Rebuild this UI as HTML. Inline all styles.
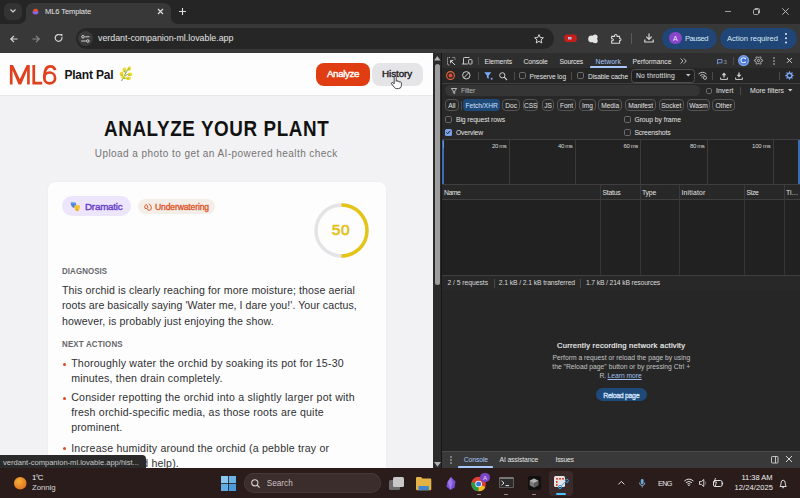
<!DOCTYPE html>
<html><head><meta charset="utf-8">
<style>
*{box-sizing:border-box;margin:0;padding:0}
html,body{width:800px;height:498px;overflow:hidden}
body{position:relative;font-family:"Liberation Sans",sans-serif;background:#202124}
.a{position:absolute}
.t{position:absolute;white-space:nowrap;line-height:1}
svg{position:absolute;overflow:visible}
#pg{position:absolute;left:0;top:0;width:433px;height:468px;overflow:hidden}
#dv{position:absolute;left:0;top:0;width:800px;height:468px;overflow:hidden}
</style></head>
<body>
<div class="a" style="left:0px;top:0px;width:800px;height:24px;background:#252525"></div>
<div class="a" style="left:0px;top:24px;width:800px;height:28.5px;background:#383838"></div>
<div class="a" style="left:0px;top:52.5px;width:800px;height:0.5px;background:#1a1a1a"></div>
<div class="a" style="left:4px;top:3px;width:18px;height:17px;background:#333333;border-radius:6px"></div>
<svg style="left:10px;top:9px" width="6" height="4" viewBox="0 0 6 4"><path d="M0.5 0.5 L3 3 L5.5 0.5" fill="none" stroke="#d0d0d0" stroke-width="1.2"/></svg>
<svg style="left:18px;top:3px" width="161" height="21" viewBox="0 0 161 21"><path d="M0 21 Q8 21 8 13 L8 8 Q8 0 16 0 L145 0 Q153 0 153 8 L153 13 Q153 21 161 21 Z" fill="#383838"/></svg>
<svg style="left:32px;top:8px" width="7" height="7" viewBox="0 0 7 7"><path d="M1 3.2 Q1 0.6 3.2 1.2 Q4 0 5.3 1.2 Q6.8 2.5 5.6 4 L1.5 4 Z" fill="#e8502e"/><path d="M0.4 3.5 L6.6 3.5 Q6.8 6.5 3.5 6.6 Q0.3 6.5 0.4 3.5Z" fill="#8a63e8"/></svg>
<div class="t" style="left:45px;top:8.32px;font-size:7.6px;color:#e6e6e6;letter-spacing:-0.13px">ML6 Template</div>
<svg style="left:157.5px;top:8.5px" width="5" height="5" viewBox="0 0 5 5"><path d="M0 0 L5 5 M5 0 L0 5" stroke="#e0e0e0" stroke-width="1.1"/></svg>
<svg style="left:178.5px;top:7.5px" width="7" height="7" viewBox="0 0 7 7"><path d="M3.5 0 V7 M0 3.5 H7" stroke="#e0e0e0" stroke-width="1.1"/></svg>
<svg style="left:725px;top:11px" width="6" height="1" viewBox="0 0 6 1"><path d="M0 0.5 H6" stroke="#bdbdbd" stroke-width="0.8"/></svg>
<svg style="left:752.5px;top:7.5px" width="7" height="7" viewBox="0 0 7 7"><rect x="0.5" y="1.5" width="5" height="5" rx="1.2" fill="none" stroke="#bdbdbd" stroke-width="0.9"/><path d="M1.8 0.5 H5.3 Q6.5 0.5 6.5 1.7 V5.2" fill="none" stroke="#bdbdbd" stroke-width="0.9"/></svg>
<svg style="left:781.5px;top:7.5px" width="7" height="7" viewBox="0 0 7 7"><path d="M0.3 0.3 L6.7 6.7 M6.7 0.3 L0.3 6.7" stroke="#c4c4c4" stroke-width="0.9"/></svg>
<svg style="left:10px;top:34.5px" width="8" height="8" viewBox="0 0 8 8"><path d="M7.5 4 H1 M4 0.8 L0.8 4 L4 7.2" fill="none" stroke="#d8d8d8" stroke-width="1.2"/></svg>
<svg style="left:32px;top:34.5px" width="8" height="8" viewBox="0 0 8 8"><path d="M0.5 4 H7 M4 0.8 L7.2 4 L4 7.2" fill="none" stroke="#8a8a8a" stroke-width="1.2"/></svg>
<svg style="left:55px;top:34.3px" width="8" height="8" viewBox="0 0 8 8"><path d="M6.9 3.2 A3.4 3.4 0 1 1 5.6 1.2" fill="none" stroke="#d8d8d8" stroke-width="1.2"/><path d="M4.6 0 L7.4 0 L7.4 2.8 Z" fill="#d8d8d8"/></svg>
<div class="a" style="left:75.5px;top:28px;width:478.5px;height:21px;background:#262626;border-radius:10.5px"></div>
<div class="a" style="left:78px;top:31px;width:15px;height:15px;background:#3a3a3a;border-radius:50%"></div>
<svg style="left:81px;top:34.5px" width="9" height="8" viewBox="0 0 9 8"><circle cx="2" cy="1.8" r="1.3" fill="none" stroke="#d0d0d0" stroke-width="1"/><path d="M4.2 1.8 H8.5 M0.2 6 H4.8" stroke="#d0d0d0" stroke-width="1"/><circle cx="6.8" cy="6" r="1.3" fill="none" stroke="#d0d0d0" stroke-width="1"/></svg>
<div class="t" style="left:98px;top:34.12px;font-size:8.84px;color:#e3e3e3;letter-spacing:-0px">verdant-companion-ml.lovable.app</div>
<svg style="left:533.5px;top:33.5px" width="10" height="10" viewBox="0 0 10 10"><path d="M5 0.6 L6.3 3.6 L9.4 3.8 L7 5.9 L7.8 9 L5 7.3 L2.2 9 L3 5.9 L0.6 3.8 L3.7 3.6 Z" fill="none" stroke="#d8d8d8" stroke-width="1" stroke-linejoin="round"/></svg>
<svg style="left:564px;top:34px" width="13" height="8.5" viewBox="0 0 13 8.5"><path d="M2.5 0.6 H10.5 Q12.8 0.6 12.8 3.2 V5.3 Q12.8 8 10.3 8 H2.7 Q0.3 8 0.3 5.3 V3.2 Q0.3 0.6 2.5 0.6Z" fill="#c41f1a"/><rect x="4.2" y="3" width="3.2" height="2.4" fill="#dfe6ff"/><rect x="5" y="3.6" width="1.6" height="1.2" fill="#6a7fd8"/></svg>
<svg style="left:588px;top:33.6px" width="10" height="9.5" viewBox="0 0 10 9.5"><circle cx="3.6" cy="4.9" r="3.4" fill="#e4e4e4"/><circle cx="7.1" cy="2.9" r="2.5" fill="#e4e4e4"/><circle cx="7.2" cy="6.7" r="2.5" fill="#e4e4e4"/></svg>
<svg style="left:610.7px;top:33.6px" width="10.5" height="9.8" viewBox="0 0 10.5 9.8"><path d="M0.6 2.4 H3.6 V1.6 Q3.6 0.5 4.8 0.5 Q6 0.5 6 1.6 V2.4 H8.6 V4.6 H9.2 Q10 4.6 10 5.6 Q10 6.6 9.2 6.6 H8.6 V9.2 H0.6 V6.8 H1.4 Q2.4 6.8 2.4 5.8 Q2.4 4.8 1.4 4.8 H0.6 Z" fill="none" stroke="#d8d8d8" stroke-width="1.05" stroke-linejoin="round"/></svg>
<div class="a" style="left:631px;top:32.5px;width:1px;height:11.5px;background:#5a5a5a"></div>
<svg style="left:644px;top:32.5px" width="10" height="10" viewBox="0 0 10 10"><path d="M5 0.5 V6 M2.3 3.6 L5 6.3 L7.7 3.6 M0.8 6.5 V9 H9.2 V6.5" fill="none" stroke="#d8d8d8" stroke-width="1.2"/></svg>
<div class="a" style="left:662px;top:27.5px;width:54.5px;height:21.5px;background:#1f4676;border-radius:11px"></div>
<div class="a" style="left:669px;top:31.9px;width:12.6px;height:12.6px;background:#8b45c8;border-radius:50%"></div>
<div class="t" style="left:672.97px;top:35.07px;font-size:7px;color:#f0e8ff">A</div>
<div class="t" style="left:685px;top:35.07px;font-size:7.6px;color:#dce6f5;letter-spacing:-0.46px">Paused</div>
<div class="a" style="left:720px;top:27.5px;width:76.5px;height:21.5px;background:#1f4676;border-radius:11px"></div>
<div class="t" style="left:727px;top:35.07px;font-size:7.6px;color:#dce6f5;letter-spacing:-0.01px">Action required</div>
<svg style="left:785px;top:33px" width="2" height="11" viewBox="0 0 2 11"><circle cx="1" cy="1" r="1" fill="#e0e8f5"/><circle cx="1" cy="5.3" r="1" fill="#e0e8f5"/><circle cx="1" cy="9.6" r="1" fill="#e0e8f5"/></svg>
<div id="pg">
<div class="a" style="left:0px;top:53px;width:433px;height:415px;background:#f2f1f3"></div>
<div class="a" style="left:0px;top:53px;width:433px;height:42px;background:#fdfdfe"></div>
<div class="a" style="left:0px;top:95px;width:433px;height:1px;background:#e9e8eb"></div>
<svg style="left:0px;top:60px" width="60" height="30" viewBox="0 60 60 30"><g fill="none" stroke="#e0401c" stroke-width="2.7"><path d="M9.9 84.4 V64.9 H13 L19.85 79.3 L26.7 64.9 H29.75 V84.4 H27.1 V70.3 L21.2 84.4 H18.5 L12.55 70.3 V84.4 Z" fill="#e0401c" stroke="none"/><path d="M33.75 65 V83.05 H42.2"/><circle cx="49.7" cy="77.9" r="5.4"/><path d="M44.3 78.2 C44.3 70 46.5 66.3 50.2 66.3 C53 66.3 54.6 68 55.2 70.2"/></g></svg>
<div class="t" style="left:64.4px;top:69.24px;font-size:12px;color:#141414;font-weight:700;letter-spacing:-0.19px">Plant Pal</div>
<svg style="left:119px;top:66px" width="14" height="16" viewBox="0 0 14 16"><path d="M2.5 15 Q5 10 10 1.5 M5.5 10.5 L10 7.5 M4 12.5 L8.5 12.5 M7 6.5 L4 4.5" stroke="#8aa05a" stroke-width="1" fill="none"/><g fill="#f2d836"><ellipse cx="5.5" cy="4" rx="2" ry="2.4" transform="rotate(-20 5.5 4)"/><ellipse cx="10.2" cy="2.6" rx="1.8" ry="2.3" transform="rotate(20 10.2 2.6)"/><ellipse cx="2.6" cy="8" rx="2" ry="2.4"/><ellipse cx="11" cy="8.4" rx="2.4" ry="1.9"/><ellipse cx="4.2" cy="11.2" rx="2" ry="1.7"/><ellipse cx="9.3" cy="12.3" rx="2.6" ry="1.9"/></g><g fill="#5cbf4a"><circle cx="5.6" cy="5" r="0.7"/><circle cx="9.8" cy="3" r="0.7"/><circle cx="3" cy="9" r="0.7"/><circle cx="10.2" cy="9" r="0.7"/><circle cx="5" cy="12" r="0.7"/><circle cx="9" cy="12.6" r="0.7"/></g></svg>
<div class="a" style="left:316.4px;top:63px;width:53.4px;height:22.6px;background:#e03d12;border-radius:8px"></div>
<div class="t" style="left:327px;top:68.9px;font-size:9.8px;color:#ffffff;letter-spacing:-0.41px;-webkit-text-stroke:0.4px #fff">Analyze</div>
<div class="a" style="left:372.4px;top:63px;width:50.3px;height:22.6px;background:#e5e5e8;border-radius:8px"></div>
<div class="t" style="left:382px;top:68.9px;font-size:9.8px;color:#1c1c1e;letter-spacing:-0.04px;-webkit-text-stroke:0.4px #1c1c1e">History</div>
<svg style="left:390.5px;top:76px" width="12" height="13" viewBox="0 0 12 13"><path d="M3.2 1.2 Q3.2 0.2 4.2 0.2 Q5.2 0.2 5.2 1.2 V5.3 Q5.4 4.6 6.2 4.7 Q7 4.8 7 5.6 Q7.3 5 8 5.2 Q8.7 5.4 8.7 6.2 Q9.1 5.8 9.7 6 Q10.4 6.3 10.4 7.2 V9.5 Q10.4 12.4 7.6 12.6 H5.6 Q4.2 12.6 3.3 11.4 L0.6 7.8 Q0.1 7 0.8 6.6 Q1.5 6.2 2.2 6.9 L3.2 7.9 Z" fill="#fff" stroke="#1a1a1a" stroke-width="0.8"/></svg>
<div class="t" style="left:103.5px;top:118.88px;font-size:21.4px;color:#111111;font-weight:700;letter-spacing:0.69px;transform:scaleX(0.88);transform-origin:0 0">ANALYZE YOUR PLANT</div>
<div class="t" style="left:94.75px;top:148.93px;font-size:10px;color:#757575;letter-spacing:0.44px">Upload a photo to get an AI-powered health check</div>
<div class="a" style="left:48.2px;top:181.5px;width:337.8px;height:298.5px;background:#fdfdfe;border-radius:7px;box-shadow:0 0 0 0.5px #ececee"></div>
<div class="a" style="left:62.2px;top:196.2px;width:68.5px;height:20px;background:#ece5fb;border-radius:10px"></div>
<svg style="left:70px;top:201.5px" width="11" height="10" viewBox="0 0 11 10"><path d="M0.6 0.6 Q3.5 0 6.2 0.9 Q6.4 4.8 3.6 6 Q0.8 4.8 0.6 0.6Z" fill="#4f86dc"/><path d="M1.4 1.2 Q3.5 0.8 5.4 1.4" stroke="#8cc0f0" stroke-width="0.6" fill="none"/><path d="M4.4 3.4 Q7.3 2.6 10 3.5 Q10 8.2 7.2 9.6 Q4.5 8.2 4.4 3.4Z" fill="#f4c430"/><path d="M5.6 7 Q6.4 8.6 8 8.2" stroke="#f08040" stroke-width="0.9" fill="none"/></svg>
<div class="t" style="left:85px;top:201.9px;font-size:9.8px;color:#6a3ec9;letter-spacing:-0.21px;-webkit-text-stroke:0.4px #6a3ec9">Dramatic</div>
<div class="a" style="left:138px;top:199px;width:77px;height:14.8px;background:#f4eee9;border-radius:7.5px"></div>
<svg style="left:144.3px;top:202.8px" width="8" height="8" viewBox="0 0 8 8"><path d="M2.2 1.3 Q3.8 3 3.8 4.2 Q3.8 5.6 2.2 5.6 Q0.6 5.6 0.6 4.2 Q0.6 3 2.2 1.3Z" fill="none" stroke="#e0501e" stroke-width="0.95"/><path d="M5 0.6 Q7.4 3.4 7.4 5 Q7.4 7.3 5.2 7.3 Q3.6 7.3 3.3 6" fill="none" stroke="#e0501e" stroke-width="0.95"/></svg>
<div class="t" style="left:155px;top:202.62px;font-size:8.6px;color:#e0501e;letter-spacing:-0.15px;-webkit-text-stroke:0.3px #e0501e">Underwatering</div>
<svg style="left:313.5px;top:202.5px" width="55" height="55" viewBox="0 0 55 55"><circle cx="27.5" cy="27.5" r="25.5" fill="none" stroke="#e4e4e7" stroke-width="3.4"/><path d="M27.5 2 A25.5 25.5 0 0 1 27.5 53" fill="none" stroke="#e6c414" stroke-width="3.4"/></svg>
<div class="t" style="left:331.75px;top:222.18px;font-size:15.5px;color:#e3c012;letter-spacing:0.63px;-webkit-text-stroke:0.6px #e3c012">50</div>
<div class="t" style="left:62px;top:267.32px;font-size:8.6px;color:#66666a;font-weight:700;letter-spacing:0.1px;transform:scaleX(0.92);transform-origin:0 0">DIAGNOSIS</div>
<div class="t" style="left:62px;top:284.72px;font-size:10.6px;color:#303032;letter-spacing:0.11px">This orchid is clearly reaching for more moisture; those aerial</div>
<div class="t" style="left:62px;top:300.22px;font-size:10.6px;color:#303032;letter-spacing:0.06px">roots are basically saying 'Water me, I dare you!'. Your cactus,</div>
<div class="t" style="left:62px;top:315.82px;font-size:10.6px;color:#303032;letter-spacing:0.13px">however, is probably just enjoying the show.</div>
<div class="t" style="left:62px;top:340.22px;font-size:8.6px;color:#66666a;font-weight:700;letter-spacing:0.2px;transform:scaleX(0.92);transform-origin:0 0">NEXT ACTIONS</div>
<div class="a" style="left:62.6px;top:362.6px;width:3px;height:3px;background:#e0481e;border-radius:50%"></div>
<div class="t" style="left:71.2px;top:357.92px;font-size:10.6px;color:#303032;letter-spacing:0.2px">Thoroughly water the orchid by soaking its pot for 15-30</div>
<div class="t" style="left:71.2px;top:373.02px;font-size:10.6px;color:#303032;letter-spacing:0.18px">minutes, then drain completely.</div>
<div class="a" style="left:62.6px;top:396.9px;width:3px;height:3px;background:#e0481e;border-radius:50%"></div>
<div class="t" style="left:71.2px;top:392.22px;font-size:10.6px;color:#303032;letter-spacing:0.23px">Consider repotting the orchid into a slightly larger pot with</div>
<div class="t" style="left:71.2px;top:407.32px;font-size:10.6px;color:#303032;letter-spacing:0.19px">fresh orchid-specific media, as those roots are quite</div>
<div class="t" style="left:71.2px;top:422.42px;font-size:10.6px;color:#303032;letter-spacing:0.11px">prominent.</div>
<div class="a" style="left:62.6px;top:447.4px;width:3px;height:3px;background:#e0481e;border-radius:50%"></div>
<div class="t" style="left:71.2px;top:442.72px;font-size:10.6px;color:#303032;letter-spacing:0.18px">Increase humidity around the orchid (a pebble tray or</div>
<div class="t" style="left:71.2px;top:457.82px;font-size:10.6px;color:#303032;letter-spacing:0.18px">humidifier could help).</div>
</div>
<div class="a" style="left:433px;top:53px;width:8.3px;height:415px;background:#2b2b2b"></div>
<svg style="left:434px;top:55.5px" width="6.6" height="4.5" viewBox="0 0 6.6 4.5"><path d="M0 4.5 L3.3 0 L6.6 4.5Z" fill="#b0b0b0"/></svg>
<div class="a" style="left:434.7px;top:64px;width:5.2px;height:221px;background:#9e9e9e;border-radius:2.6px"></div>
<svg style="left:433.8px;top:461.8px" width="7" height="4.8" viewBox="0 0 7 4.8"><path d="M0 0 L3.5 4.8 L7 0Z" fill="#b0b0b0"/></svg>
<div id="dv">
<div class="a" style="left:441px;top:53px;width:359px;height:415px;background:#262626"></div>
<div class="a" style="left:441px;top:53px;width:359px;height:14.5px;background:#2e2e2e"></div>
<div class="a" style="left:441px;top:67.5px;width:359px;height:0.8px;background:#3f3f3f"></div>
<svg style="left:447px;top:56.5px" width="8.5" height="8.5" viewBox="0 0 8.5 8.5"><path d="M3 0.5 H1 Q0.5 0.5 0.5 1 V7.5 Q0.5 8 1 8 H3 M5.5 0.5 H7.5 Q8 0.5 8 1 V3" fill="none" stroke="#c8c8c8" stroke-width="0.9" stroke-dasharray="1.2 0.8"/><path d="M3.6 3.6 L8 8 M3.6 3.6 H6.2 M3.6 3.6 V6.2" fill="none" stroke="#d8d8d8" stroke-width="1"/></svg>
<svg style="left:462px;top:57px" width="10.5" height="7.5" viewBox="0 0 10.5 7.5"><path d="M1.5 7 V1.3 Q1.5 0.5 2.3 0.5 H7.5 M0 7 H5.8" fill="none" stroke="#c8c8c8" stroke-width="1"/><rect x="6.6" y="2.6" width="3.4" height="4.4" rx="0.6" fill="none" stroke="#c8c8c8" stroke-width="1"/></svg>
<div class="a" style="left:477.5px;top:56.5px;width:0.8px;height:8px;background:#4a4a4a"></div>
<div class="t" style="left:484.5px;top:58.94px;font-size:6.8px;color:#e3e3e3;letter-spacing:-0.11px">Elements</div>
<div class="t" style="left:523.6px;top:58.94px;font-size:6.8px;color:#e3e3e3;letter-spacing:-0.14px">Console</div>
<div class="t" style="left:559.5px;top:58.94px;font-size:6.8px;color:#e3e3e3;letter-spacing:-0.21px">Sources</div>
<div class="t" style="left:595.4px;top:58.94px;font-size:6.8px;color:#a8c7fa;letter-spacing:0.09px">Network</div>
<div class="a" style="left:590px;top:66.2px;width:37px;height:2px;background:#a8c7fa;border-radius:1px 1px 0 0"></div>
<div class="t" style="left:632.5px;top:58.94px;font-size:6.8px;color:#e3e3e3;letter-spacing:0.01px">Performance</div>
<svg style="left:679.5px;top:57.5px" width="7" height="6" viewBox="0 0 7 6"><path d="M0.5 0.5 L3 3 L0.5 5.5 M3.8 0.5 L6.3 3 L3.8 5.5" fill="none" stroke="#c8c8c8" stroke-width="0.9"/></svg>
<svg style="left:717px;top:58.5px" width="5.5" height="5.5" viewBox="0 0 5.5 5.5"><path d="M0.5 0.5 H5 V3.8 H1.8 L0.5 5 Z" fill="none" stroke="#7a9ae0" stroke-width="0.9"/></svg>
<div class="t" style="left:723.5px;top:59.45px;font-size:6.2px;color:#9a9a9a">3</div>
<div class="a" style="left:733px;top:56.5px;width:0.8px;height:8px;background:#4a4a4a"></div>
<svg style="left:738.1px;top:54.8px" width="11.2" height="11.2" viewBox="0 0 11.2 11.2"><defs><radialGradient id="aig" cx="0.5" cy="0.5" r="0.5"><stop offset="0.55" stop-color="#3d6fd6"/><stop offset="1" stop-color="#8db2f2"/></radialGradient></defs><circle cx="5.6" cy="5.6" r="5.6" fill="url(#aig)"/></svg>
<svg style="left:740.3px;top:57.3px" width="6.5" height="6.5" viewBox="0 0 6.5 6.5"><path d="M5 1.3 A2.5 2.5 0 1 0 5.6 4.6" fill="none" stroke="#f0f4ff" stroke-width="1.1"/><circle cx="5.3" cy="1.6" r="0.8" fill="#f0f4ff"/></svg>
<svg style="left:754px;top:56px" width="9" height="9" viewBox="0 0 9 9"><path d="M8.55 4.50 L8.53 4.85 L8.34 5.18 L7.69 5.35 L7.18 5.47 L7.08 5.70 L6.97 5.92 L6.83 6.13 L6.68 6.33 L6.83 6.83 L7.01 7.49 L6.82 7.82 L6.53 8.01 L6.21 8.17 L5.83 8.16 L5.35 7.69 L4.99 7.31 L4.75 7.34 L4.50 7.35 L4.25 7.34 L4.01 7.31 L3.65 7.69 L3.17 8.16 L2.79 8.17 L2.48 8.01 L2.18 7.82 L1.99 7.49 L2.17 6.83 L2.32 6.33 L2.17 6.13 L2.03 5.93 L1.92 5.70 L1.82 5.47 L1.31 5.35 L0.66 5.18 L0.47 4.85 L0.45 4.50 L0.47 4.15 L0.66 3.82 L1.31 3.65 L1.82 3.53 L1.92 3.30 L2.03 3.08 L2.17 2.87 L2.32 2.67 L2.17 2.17 L1.99 1.51 L2.18 1.18 L2.47 0.99 L2.79 0.83 L3.17 0.84 L3.65 1.31 L4.01 1.69 L4.25 1.66 L4.50 1.65 L4.75 1.66 L4.99 1.69 L5.35 1.31 L5.83 0.84 L6.21 0.83 L6.52 0.99 L6.82 1.18 L7.01 1.51 L6.83 2.17 L6.68 2.67 L6.83 2.87 L6.97 3.08 L7.08 3.30 L7.18 3.53 L7.69 3.65 L8.34 3.82 L8.53 4.15Z" fill="none" stroke="#cfcfcf" stroke-width="0.9" stroke-linejoin="round"/><circle cx="4.5" cy="4.5" r="1.1" fill="none" stroke="#cfcfcf" stroke-width="0.9"/></svg>
<svg style="left:773px;top:56.5px" width="2" height="8" viewBox="0 0 2 8"><circle cx="1" cy="1" r="0.8" fill="#cfcfcf"/><circle cx="1" cy="4" r="0.8" fill="#cfcfcf"/><circle cx="1" cy="7" r="0.8" fill="#cfcfcf"/></svg>
<svg style="left:786.9px;top:58px" width="4.8" height="4.8" viewBox="0 0 4.8 4.8"><path d="M0 0 L4.8 4.8 M4.8 0 L0 4.8" stroke="#d8d8d8" stroke-width="0.95"/></svg>
<div class="a" style="left:441px;top:68.3px;width:359px;height:14.7px;background:#262626"></div>
<div class="a" style="left:441px;top:83px;width:359px;height:0.8px;background:#3f3f3f"></div>
<svg style="left:446px;top:71px" width="9" height="9" viewBox="0 0 9 9"><circle cx="4.5" cy="4.5" r="3.9" fill="none" stroke="#e9683f" stroke-width="1.1"/><circle cx="4.5" cy="4.5" r="2" fill="#e5483a"/></svg>
<svg style="left:462.2px;top:71.2px" width="8.6" height="8.6" viewBox="0 0 8.6 8.6"><circle cx="4.3" cy="4.3" r="3.7" fill="none" stroke="#cfcfcf" stroke-width="1"/><path d="M1.7 6.9 L6.9 1.7" stroke="#cfcfcf" stroke-width="1"/></svg>
<div class="a" style="left:477.5px;top:71.5px;width:0.8px;height:8px;background:#4a4a4a"></div>
<svg style="left:484px;top:72px" width="9" height="8" viewBox="0 0 9 8"><path d="M0.3 0.3 H7.3 L4.7 3.6 V6.8 L2.9 5.8 V3.6 Z" fill="#7cacf8"/><circle cx="7.6" cy="6.8" r="1" fill="#7cacf8"/></svg>
<svg style="left:499px;top:71.5px" width="8.5" height="8.5" viewBox="0 0 8.5 8.5"><circle cx="3.3" cy="3.3" r="2.6" fill="none" stroke="#d0d0d0" stroke-width="1"/><path d="M5.2 5.2 L8 8" stroke="#d0d0d0" stroke-width="1.1"/></svg>
<div class="a" style="left:513.8px;top:71.5px;width:0.8px;height:8px;background:#4a4a4a"></div>
<div class="a" style="left:519.3px;top:72.3px;width:6.5px;height:6.5px;background:transparent;border:1px solid #6a6a6a;border-radius:1.8px"></div>
<div class="t" style="left:529.6px;top:73.76px;font-size:6.6px;color:#e3e3e3;letter-spacing:-0.05px">Preserve log</div>
<div class="a" style="left:571.3px;top:71.5px;width:0.8px;height:8px;background:#4a4a4a"></div>
<div class="a" style="left:577.3px;top:72.3px;width:6.5px;height:6.5px;background:transparent;border:1px solid #6a6a6a;border-radius:1.8px"></div>
<div class="t" style="left:588px;top:73.76px;font-size:6.6px;color:#e3e3e3;letter-spacing:-0.11px">Disable cache</div>
<div class="a" style="left:631.4px;top:68.5px;width:63.2px;height:14.3px;background:#202020;border:0.8px solid #505050;border-radius:3.5px"></div>
<div class="t" style="left:636px;top:73.39px;font-size:6.8px;color:#e3e3e3;letter-spacing:0.18px">No throttling</div>
<svg style="left:686.2px;top:74.3px" width="4.5" height="2.6" viewBox="0 0 4.5 2.6"><path d="M0 0 H4.5 L2.25 2.6Z" fill="#c8c8c8"/></svg>
<svg style="left:697.8px;top:71px" width="9.5" height="8.5" viewBox="0 0 9.5 8.5"><path d="M0.5 3 Q4.5 -0.5 8.5 3 M2 4.6 Q4.5 2.3 7 4.6 M3.4 6.2 Q4.5 5.2 5.6 6.2" fill="none" stroke="#d0d0d0" stroke-width="0.9"/><circle cx="7" cy="6.8" r="1.6" fill="#282828" stroke="#d0d0d0" stroke-width="0.8"/></svg>
<div class="a" style="left:712px;top:71.5px;width:0.8px;height:8px;background:#4a4a4a"></div>
<svg style="left:719.5px;top:71.5px" width="8" height="8" viewBox="0 0 8 8"><path d="M4 5.6 V2.5" stroke="#d0d0d0" stroke-width="1.3"/><path d="M1.6 3.2 L4 0.4 L6.4 3.2Z" fill="#d0d0d0"/><path d="M0.6 5.5 V7.4 H7.4 V5.5" fill="none" stroke="#d0d0d0" stroke-width="1"/></svg>
<svg style="left:735.3px;top:71.5px" width="8" height="8" viewBox="0 0 8 8"><path d="M4 0.4 V3.4" stroke="#d0d0d0" stroke-width="1.3"/><path d="M1.6 2.8 L4 5.6 L6.4 2.8Z" fill="#d0d0d0"/><path d="M0.6 5.5 V7.4 H7.4 V5.5" fill="none" stroke="#d0d0d0" stroke-width="1"/></svg>
<div class="a" style="left:779px;top:71.5px;width:0.8px;height:8px;background:#4a4a4a"></div>
<svg style="left:785.2px;top:71.1px" width="9" height="9" viewBox="0 0 9 9"><path d="M8.80 4.50 L8.78 4.87 L8.17 5.15 L7.42 5.28 L7.34 5.53 L7.24 5.78 L7.12 6.01 L7.55 6.64 L7.79 7.26 L7.54 7.54 L7.26 7.79 L6.64 7.55 L6.01 7.12 L5.78 7.24 L5.53 7.34 L5.28 7.42 L5.15 8.17 L4.87 8.78 L4.50 8.80 L4.13 8.78 L3.85 8.17 L3.72 7.42 L3.47 7.34 L3.22 7.24 L2.99 7.12 L2.36 7.55 L1.74 7.79 L1.46 7.54 L1.21 7.26 L1.45 6.64 L1.88 6.01 L1.76 5.78 L1.66 5.53 L1.58 5.28 L0.83 5.15 L0.22 4.87 L0.20 4.50 L0.22 4.13 L0.83 3.85 L1.58 3.72 L1.66 3.47 L1.76 3.22 L1.88 2.99 L1.45 2.36 L1.21 1.74 L1.46 1.46 L1.74 1.21 L2.36 1.45 L2.99 1.88 L3.22 1.76 L3.47 1.66 L3.72 1.58 L3.85 0.83 L4.13 0.22 L4.50 0.20 L4.87 0.22 L5.15 0.83 L5.28 1.58 L5.53 1.66 L5.78 1.76 L6.01 1.88 L6.64 1.45 L7.26 1.21 L7.54 1.46 L7.79 1.74 L7.55 2.36 L7.12 2.99 L7.24 3.22 L7.34 3.47 L7.42 3.72 L8.17 3.85 L8.78 4.13Z" fill="#7aa2ee"/><circle cx="4.5" cy="4.5" r="1.6" fill="#262626"/></svg>
<div class="a" style="left:441px;top:83.8px;width:359px;height:13.7px;background:#282828"></div>
<div class="a" style="left:445px;top:84.7px;width:255px;height:11.5px;background:#353535;border-radius:5.75px"></div>
<svg style="left:450.5px;top:87.8px" width="6" height="6" viewBox="0 0 6 6"><path d="M0.3 0.5 H5.7 L3.7 3 V5.6 L2.3 4.8 V3 Z" fill="none" stroke="#c8c8c8" stroke-width="0.9"/></svg>
<div class="t" style="left:461px;top:88.04px;font-size:6.8px;color:#b8b8b8;letter-spacing:-0.19px">Filter</div>
<div class="a" style="left:705.8px;top:87.5px;width:6.5px;height:6.5px;background:transparent;border:1px solid #6a6a6a;border-radius:1.8px"></div>
<div class="t" style="left:716px;top:88.04px;font-size:6.8px;color:#e3e3e3;letter-spacing:0.08px">Invert</div>
<div class="a" style="left:739.8px;top:86.5px;width:0.8px;height:8px;background:#4a4a4a"></div>
<div class="t" style="left:750px;top:88.04px;font-size:6.8px;color:#e3e3e3;letter-spacing:0.03px">More filters</div>
<svg style="left:788px;top:89.3px" width="4.5" height="2.6" viewBox="0 0 4.5 2.6"><path d="M0 0 H4.5 L2.25 2.6Z" fill="#d0d0d0"/></svg>
<div class="a" style="left:441px;top:97.5px;width:359px;height:15px;background:#282828"></div>
<div class="a" style="left:445px;top:99.4px;width:13.6px;height:11.4px;background:transparent;border:0.8px solid #555555;border-radius:4px"></div>
<div class="t" style="left:448.13px;top:102.81px;font-size:6.6px;color:#e3e3e3">All</div>
<div class="a" style="left:463.4px;top:99.4px;width:36.6px;height:11.4px;background:#1e4a7a;border-radius:4px"></div>
<div class="t" style="left:465.56px;top:102.81px;font-size:6.6px;color:#d3e3fd">Fetch/XHR</div>
<div class="a" style="left:502.4px;top:99.4px;width:17.6px;height:11.4px;background:transparent;border:0.8px solid #555555;border-radius:4px"></div>
<div class="t" style="left:505.33px;top:102.81px;font-size:6.6px;color:#e3e3e3">Doc</div>
<div class="a" style="left:523px;top:99.4px;width:15.4px;height:11.4px;background:transparent;border:0.8px solid #555555;border-radius:4px"></div>
<div class="t" style="left:523.91px;top:102.81px;font-size:6.6px;color:#e3e3e3">CSS</div>
<div class="a" style="left:542px;top:99.4px;width:12px;height:11.4px;background:transparent;border:0.8px solid #555555;border-radius:4px"></div>
<div class="t" style="left:544.15px;top:102.81px;font-size:6.6px;color:#e3e3e3">JS</div>
<div class="a" style="left:557px;top:99.4px;width:19px;height:11.4px;background:transparent;border:0.8px solid #555555;border-radius:4px"></div>
<div class="t" style="left:559.9px;top:102.81px;font-size:6.6px;color:#e3e3e3">Font</div>
<div class="a" style="left:579px;top:99.4px;width:17px;height:11.4px;background:transparent;border:0.8px solid #555555;border-radius:4px"></div>
<div class="t" style="left:582px;top:102.81px;font-size:6.6px;color:#e3e3e3">Img</div>
<div class="a" style="left:598px;top:99.4px;width:24.4px;height:11.4px;background:transparent;border:0.8px solid #555555;border-radius:4px"></div>
<div class="t" style="left:601.21px;top:102.81px;font-size:6.6px;color:#e3e3e3">Media</div>
<div class="a" style="left:625.4px;top:99.4px;width:30.6px;height:11.4px;background:transparent;border:0.8px solid #555555;border-radius:4px"></div>
<div class="t" style="left:628.23px;top:102.81px;font-size:6.6px;color:#e3e3e3">Manifest</div>
<div class="a" style="left:658.6px;top:99.4px;width:25.4px;height:11.4px;background:transparent;border:0.8px solid #555555;border-radius:4px"></div>
<div class="t" style="left:661.21px;top:102.81px;font-size:6.6px;color:#e3e3e3">Socket</div>
<div class="a" style="left:687px;top:99.4px;width:23px;height:11.4px;background:transparent;border:0.8px solid #555555;border-radius:4px"></div>
<div class="t" style="left:689.27px;top:102.81px;font-size:6.6px;color:#e3e3e3">Wasm</div>
<div class="a" style="left:712.4px;top:99.4px;width:22.6px;height:11.4px;background:transparent;border:0.8px solid #555555;border-radius:4px"></div>
<div class="t" style="left:715.45px;top:102.81px;font-size:6.6px;color:#e3e3e3">Other</div>
<div class="a" style="left:460.6px;top:100.5px;width:0.8px;height:9px;background:#4a4a4a"></div>
<div class="a" style="left:441px;top:112.5px;width:359px;height:0.8px;background:#3f3f3f"></div>
<div class="a" style="left:441px;top:113.3px;width:359px;height:25.7px;background:#282828"></div>
<div class="a" style="left:445px;top:116px;width:6.5px;height:6.5px;background:transparent;border:1px solid #6a6a6a;border-radius:1.8px"></div>
<div class="t" style="left:456px;top:117.14px;font-size:6.8px;color:#e3e3e3;letter-spacing:-0.1px">Big request rows</div>
<div class="a" style="left:445px;top:129px;width:6.5px;height:6.5px;background:#7aa2e8;border-radius:1.5px"></div><svg style="left:445px;top:129px" width="6.5" height="6.5" viewBox="0 0 6.5 6.5"><path d="M1.3 3.3 L2.7 4.7 L5.3 1.8" fill="none" stroke="#1f1f1f" stroke-width="1"/></svg>
<div class="t" style="left:456px;top:130.34px;font-size:6.8px;color:#e3e3e3;letter-spacing:-0.17px">Overview</div>
<div class="a" style="left:624.4px;top:116px;width:6.5px;height:6.5px;background:transparent;border:1px solid #6a6a6a;border-radius:1.8px"></div>
<div class="t" style="left:634.4px;top:117.14px;font-size:6.8px;color:#e3e3e3;letter-spacing:-0.05px">Group by frame</div>
<div class="a" style="left:624.4px;top:129px;width:6.5px;height:6.5px;background:transparent;border:1px solid #6a6a6a;border-radius:1.8px"></div>
<div class="t" style="left:634.4px;top:130.34px;font-size:6.8px;color:#e3e3e3;letter-spacing:-0.16px">Screenshots</div>
<div class="a" style="left:441px;top:139px;width:359px;height:0.8px;background:#3f3f3f"></div>
<div class="a" style="left:441px;top:139.8px;width:359px;height:44.2px;background:#222222"></div>
<div class="a" style="left:508.5px;top:139.8px;width:0.8px;height:44.2px;background:#3a3a3a"></div>
<div class="t" style="left:492.1px;top:142.92px;font-size:6px;color:#d8d8d8;letter-spacing:-0.39px">20 ms</div>
<div class="a" style="left:574.5px;top:139.8px;width:0.8px;height:44.2px;background:#3a3a3a"></div>
<div class="t" style="left:558.1px;top:142.92px;font-size:6px;color:#d8d8d8;letter-spacing:-0.39px">40 ms</div>
<div class="a" style="left:640px;top:139.8px;width:0.8px;height:44.2px;background:#3a3a3a"></div>
<div class="t" style="left:623.6px;top:142.92px;font-size:6px;color:#d8d8d8;letter-spacing:-0.39px">60 ms</div>
<div class="a" style="left:706.5px;top:139.8px;width:0.8px;height:44.2px;background:#3a3a3a"></div>
<div class="t" style="left:690.1px;top:142.92px;font-size:6px;color:#d8d8d8;letter-spacing:-0.39px">80 ms</div>
<div class="a" style="left:772.5px;top:139.8px;width:0.8px;height:44.2px;background:#3a3a3a"></div>
<div class="t" style="left:752px;top:142.92px;font-size:6px;color:#d8d8d8;letter-spacing:-0.2px">100 ms</div>
<div class="a" style="left:442.3px;top:140px;width:2px;height:44px;background:#3d6cb4"></div>
<div class="a" style="left:442.6px;top:141px;width:1.4px;height:7px;background:#6a8fc8"></div>
<div class="a" style="left:797.5px;top:140px;width:2px;height:44px;background:#3d6cb4"></div>
<div class="a" style="left:441px;top:184px;width:359px;height:1px;background:#3f3f3f"></div>
<div class="a" style="left:441px;top:185px;width:359px;height:14.2px;background:#282828"></div>
<div class="a" style="left:441px;top:199.2px;width:359px;height:0.8px;background:#3f3f3f"></div>
<div class="a" style="left:600px;top:185px;width:0.8px;height:90px;background:#3a3a3a"></div>
<div class="a" style="left:639.5px;top:185px;width:0.8px;height:90px;background:#3a3a3a"></div>
<div class="a" style="left:678.8px;top:185px;width:0.8px;height:90px;background:#3a3a3a"></div>
<div class="a" style="left:744.3px;top:185px;width:0.8px;height:90px;background:#3a3a3a"></div>
<div class="a" style="left:783.8px;top:185px;width:0.8px;height:90px;background:#3a3a3a"></div>
<div class="t" style="left:444px;top:190.24px;font-size:6.8px;color:#e3e3e3;letter-spacing:-0.41px">Name</div>
<div class="t" style="left:602.5px;top:190.24px;font-size:6.8px;color:#e3e3e3;letter-spacing:-0.21px">Status</div>
<div class="t" style="left:642px;top:190.24px;font-size:6.8px;color:#e3e3e3;letter-spacing:-0.19px">Type</div>
<div class="t" style="left:681.5px;top:190.24px;font-size:6.8px;color:#e3e3e3;letter-spacing:0.19px">Initiator</div>
<div class="t" style="left:746.5px;top:190.24px;font-size:6.8px;color:#e3e3e3;letter-spacing:-0.31px">Size</div>
<div class="t" style="left:786px;top:190.24px;font-size:6.8px;color:#e3e3e3">Ti…</div>
<div class="a" style="left:441px;top:200px;width:359px;height:75px;background:#212121"></div>
<div class="a" style="left:600px;top:200px;width:0.8px;height:75px;background:#353535"></div>
<div class="a" style="left:639.5px;top:200px;width:0.8px;height:75px;background:#353535"></div>
<div class="a" style="left:678.8px;top:200px;width:0.8px;height:75px;background:#353535"></div>
<div class="a" style="left:744.3px;top:200px;width:0.8px;height:75px;background:#353535"></div>
<div class="a" style="left:783.8px;top:200px;width:0.8px;height:75px;background:#353535"></div>
<div class="a" style="left:441px;top:275px;width:359px;height:0.8px;background:#3f3f3f"></div>
<div class="a" style="left:441px;top:275.8px;width:359px;height:14.2px;background:#282828"></div>
<div class="t" style="left:447.5px;top:280.04px;font-size:6.8px;color:#d8d8d8;letter-spacing:-0.05px">2 / 5 requests</div>
<div class="a" style="left:493.5px;top:279.3px;width:0.8px;height:8.7px;background:#4a4a4a"></div>
<div class="t" style="left:498.75px;top:280.04px;font-size:6.8px;color:#d8d8d8;letter-spacing:-0.1px">2.1 kB / 2.1 kB transferred</div>
<div class="a" style="left:580.3px;top:279.3px;width:0.8px;height:8.7px;background:#4a4a4a"></div>
<div class="t" style="left:586px;top:280.04px;font-size:6.8px;color:#d8d8d8;letter-spacing:-0.15px">1.7 kB / 214 kB resources</div>
<div class="t" style="left:557px;top:342.07px;font-size:7.6px;color:#ececec;letter-spacing:0.27px;-webkit-text-stroke:0.2px #ececec">Currently recording network activity</div>
<div class="t" style="left:552.5px;top:355.28px;font-size:6.75px;color:#c4c4c4;letter-spacing:-0px">Perform a request or reload the page by using</div>
<div class="t" style="left:552.25px;top:364.28px;font-size:6.75px;color:#c4c4c4;letter-spacing:0.01px">the "Reload page" button or by pressing Ctrl +</div>
<div class="t" style="left:599.5px;top:373.28px;font-size:6.75px;color:#c4c4c4">R.</div>
<div class="t" style="left:607.5px;top:373.28px;font-size:6.75px;color:#9fbff0;letter-spacing:-0.03px;text-decoration:underline">Learn more</div>
<div class="a" style="left:595.75px;top:388.25px;width:51px;height:13px;background:#1e4a7a;border-radius:7px"></div>
<div class="t" style="left:603.25px;top:392.37px;font-size:7px;color:#d3e3fd;letter-spacing:-0.34px;-webkit-text-stroke:0.3px #d3e3fd">Reload page</div>
<div class="a" style="left:441px;top:451px;width:359px;height:17px;background:#393939"></div>
<div class="a" style="left:441px;top:450.5px;width:359px;height:0.7px;background:#4a4a4a"></div>
<svg style="left:450px;top:455.5px" width="2" height="8" viewBox="0 0 2 8"><circle cx="1" cy="1" r="0.8" fill="#cfcfcf"/><circle cx="1" cy="4" r="0.8" fill="#cfcfcf"/><circle cx="1" cy="7" r="0.8" fill="#cfcfcf"/></svg>
<div class="t" style="left:463.75px;top:457.24px;font-size:6.8px;color:#a8c7fa;letter-spacing:-0.1px">Console</div>
<div class="a" style="left:458px;top:465.8px;width:35px;height:2px;background:#a8c7fa;border-radius:1px 1px 0 0"></div>
<div class="t" style="left:499.5px;top:457.24px;font-size:6.8px;color:#e3e3e3;letter-spacing:-0.13px">AI assistance</div>
<div class="t" style="left:555.5px;top:457.24px;font-size:6.8px;color:#e3e3e3;letter-spacing:-0.23px">Issues</div>
<svg style="left:770.5px;top:455.5px" width="7.5" height="7.5" viewBox="0 0 7.5 7.5"><rect x="0.5" y="0.5" width="6.5" height="6.5" rx="0.7" fill="none" stroke="#d0d0d0" stroke-width="0.9"/><path d="M4.5 0.5 V7" stroke="#d0d0d0" stroke-width="0.9"/></svg>
<svg style="left:786px;top:456px" width="6" height="6" viewBox="0 0 6 6"><path d="M0 0 L6 6 M6 0 L0 6" stroke="#d8d8d8" stroke-width="1"/></svg>
<div class="a" style="left:441px;top:53px;width:1px;height:415px;background:#161616"></div>
</div>
<div class="a" style="left:0px;top:455px;width:145.6px;height:13.4px;background:#2a2a2b;border-radius:0 4px 0 0"></div>
<div class="t" style="left:3px;top:458.61px;font-size:7.55px;color:#c8c8c8;letter-spacing:0px">verdant-companion-ml.lovable.app/hist...</div>
<div class="a" style="left:0px;top:468.4px;width:800px;height:29.6px;background:#2a1c1b"></div>
<svg style="left:13.5px;top:476.5px" width="12.5" height="12.5" viewBox="0 0 12.5 12.5"><defs><radialGradient id="wg" cx="0.4" cy="0.35" r="0.7"><stop offset="0" stop-color="#f6b03a"/><stop offset="1" stop-color="#e0701e"/></radialGradient></defs><circle cx="6.25" cy="6.25" r="6.25" fill="url(#wg)"/></svg>
<div class="t" style="left:32px;top:474.2px;font-size:7.8px;color:#f0f0f0;letter-spacing:-0.86px">1°C</div>
<div class="t" style="left:32px;top:483.8px;font-size:7.8px;color:#d8d8d8;letter-spacing:-0.06px">Zonnig</div>
<svg style="left:220.7px;top:476.1px" width="15" height="15" viewBox="0 0 15 15"><rect x="0" y="0" width="7.1" height="7.1" fill="#8cc8ee"/><rect x="7.9" y="0" width="7.1" height="7.1" fill="#6ab4e8"/><rect x="0" y="7.9" width="7.1" height="7.1" fill="#62ace4"/><rect x="7.9" y="7.9" width="7.1" height="7.1" fill="#4a9ade"/></svg>
<div class="a" style="left:244.3px;top:473.1px;width:137px;height:20.2px;background:#3a2d2c;border-radius:10px;box-shadow:inset 0 0 0 0.7px #4a3c3a"></div>
<svg style="left:251px;top:479.2px" width="9" height="9" viewBox="0 0 9 9"><circle cx="3.8" cy="3.8" r="3.1" fill="none" stroke="#d8d0d0" stroke-width="1.1"/><path d="M6 6 L8.6 8.6" stroke="#d8d0d0" stroke-width="1.2"/></svg>
<div class="t" style="left:266.8px;top:479.96px;font-size:8.2px;color:#cdc3c2;letter-spacing:0px">Search</div>
<div class="a" style="left:388.75px;top:480px;width:11.25px;height:10px;background:#6a6a6a;border-radius:1.5px"></div>
<div class="a" style="left:392.5px;top:476.5px;width:11.25px;height:10px;background:#c8c8c8;border-radius:1.5px"></div>
<svg style="left:416px;top:477px" width="15.3" height="13.3" viewBox="0 0 15.3 13.3"><path d="M0 1 Q0 0 1 0 H5 L6.5 1.5 H14.3 Q15.3 1.5 15.3 2.5 V12.3 Q15.3 13.3 14.3 13.3 H1 Q0 13.3 0 12.3Z" fill="#e3b445"/><rect x="2.5" y="9" width="10.3" height="4.3" fill="#3f86cf"/></svg>
<svg style="left:446.2px;top:477px" width="10" height="13" viewBox="0 0 10 13"><path d="M5 0 L9.5 4.5 L8.5 10.5 L4.5 13 L0.3 9.5 L1.5 5 Z" fill="#7a4fd6"/><path d="M5 0 L6.5 6 L4.5 13 L1.5 5Z" fill="#9a78ea"/></svg>
<svg style="left:471px;top:475.5px" width="15.5" height="15.5" viewBox="0 0 15.5 15.5"><circle cx="7.6" cy="8" r="7.3" fill="#dd3f30"/><path d="M7.6 8 L1.2 11.6 A7.3 7.3 0 0 0 7.6 15.3 Z" fill="#2a9a4a"/><path d="M7.6 8 L7.6 15.3 A7.3 7.3 0 0 0 14.3 11 Z" fill="#f0c020"/><path d="M7.6 8 L1.2 11.6 A7.3 7.3 0 0 1 0.5 6 Z" fill="#2a9a4a"/><circle cx="7.6" cy="8" r="3.3" fill="#fff"/><circle cx="7.6" cy="8" r="2.5" fill="#3a78d8"/></svg>
<div class="a" style="left:480.2px;top:472.9px;width:9.4px;height:9.4px;background:#7c44c8;border-radius:50%"></div>
<div class="t" style="left:482.9px;top:475.42px;font-size:6px;color:#e8dcff">A</div>
<div class="a" style="left:476.9px;top:493.6px;width:4px;height:1.2px;background:#9a9090;border-radius:1px"></div>
<div class="a" style="left:498.6px;top:477px;width:15.4px;height:11.4px;background:#2c2c2c;border-radius:1.5px;box-shadow:inset 0 0 0 0.8px #6a6a6a"></div>
<div class="a" style="left:498.6px;top:477px;width:15.4px;height:1.6px;background:#777777;border-radius:1.5px 1.5px 0 0"></div>
<svg style="left:500.5px;top:480px" width="11" height="7" viewBox="0 0 11 7"><path d="M0.5 0.8 L3 3 L0.5 5.2" fill="none" stroke="#e8e8e8" stroke-width="1"/><path d="M4.5 5.6 H8" stroke="#e8e8e8" stroke-width="1"/></svg>
<div class="a" style="left:504px;top:493.6px;width:4px;height:1.2px;background:#9a9090;border-radius:1px"></div>
<div class="a" style="left:527.8px;top:476.3px;width:13px;height:13.4px;background:#101010;border-radius:2px"></div>
<svg style="left:529.3px;top:478px" width="10" height="10" viewBox="0 0 10 10"><path d="M5 0.5 L9.3 2.8 V7.3 L5 9.5 L0.7 7.3 V2.8Z" fill="#7a7a7a"/><path d="M0.7 2.8 L5 5 L9.3 2.8 L5 0.5Z" fill="#b0b0b0"/><path d="M5 5 V9.5 L9.3 7.3 V2.8Z" fill="#5a5a5a"/></svg>
<div class="a" style="left:532px;top:493.6px;width:4px;height:1.2px;background:#9a9090;border-radius:1px"></div>
<div class="a" style="left:549px;top:471.4px;width:24.4px;height:24.8px;background:#3a2b2a;border-radius:4px"></div>
<div class="a" style="left:553.9px;top:476px;width:11.1px;height:11px;background:#e8e4e4;border-radius:1.5px"></div>
<svg style="left:554.5px;top:477px" width="11" height="11" viewBox="0 0 11 11"><rect x="1" y="1" width="2" height="1.6" fill="#d84a3a"/><rect x="4" y="1" width="2" height="1.6" fill="#d84a3a"/><rect x="7" y="1" width="2" height="1.6" fill="#d84a3a"/><rect x="1" y="4" width="1.6" height="2" fill="#d84a3a"/><rect x="1" y="7" width="1.6" height="2" fill="#d84a3a"/></svg>
<svg style="left:558px;top:479px" width="11" height="10" viewBox="0 0 11 10"><circle cx="8.8" cy="1.8" r="1.6" fill="none" stroke="#3a9ae0" stroke-width="1"/><circle cx="2" cy="8" r="1.6" fill="none" stroke="#3a9ae0" stroke-width="1"/><path d="M3.3 7 L7.5 2.8" stroke="#3a9ae0" stroke-width="1"/></svg>
<div class="a" style="left:556px;top:493.4px;width:10.3px;height:1.5px;background:#4cc2ff;border-radius:1px"></div>
<svg style="left:618.2px;top:481.2px" width="6.8" height="3.6" viewBox="0 0 6.8 3.6"><path d="M0.4 3.4 L3.4 0.4 L6.4 3.4" fill="none" stroke="#e0e0e0" stroke-width="1"/></svg>
<svg style="left:638.5px;top:479.2px" width="6.4" height="8.5" viewBox="0 0 6.4 8.5"><rect x="1.8" y="0" width="2.8" height="5.2" rx="1.4" fill="#6aaede"/><path d="M0.5 3.6 Q0.5 6.5 3.2 6.5 Q5.9 6.5 5.9 3.6 M3.2 6.5 V8.5" fill="none" stroke="#8ab8d8" stroke-width="0.9"/></svg>
<div class="t" style="left:658px;top:480.12px;font-size:7.3px;color:#e8e8e8;letter-spacing:-0.67px">ENG</div>
<svg style="left:684.2px;top:478px" width="9.8" height="8" viewBox="0 0 9.8 8"><path d="M0.4 3 Q4.9 -0.8 9.4 3 M1.9 4.6 Q4.9 2.2 7.9 4.6 M3.4 6.2 Q4.9 5 6.4 6.2" fill="none" stroke="#e8e8e8" stroke-width="0.95"/><circle cx="4.9" cy="7.4" r="0.7" fill="#e8e8e8"/></svg>
<svg style="left:698.5px;top:478.5px" width="9" height="8" viewBox="0 0 9 8"><path d="M0.5 2.6 H2.3 L4.8 0.5 V7.5 L2.3 5.4 H0.5Z" fill="none" stroke="#e8e8e8" stroke-width="0.9"/><path d="M6.3 2.5 Q7.3 4 6.3 5.5" fill="none" stroke="#8a8080" stroke-width="0.8"/></svg>
<svg style="left:713.4px;top:477.5px" width="11" height="9" viewBox="0 0 11 9"><rect x="0.5" y="2.5" width="8.5" height="6" rx="1.5" fill="none" stroke="#e8e8e8" stroke-width="0.95"/><path d="M9.6 4.5 V6.5" stroke="#e8e8e8" stroke-width="1"/><path d="M2.5 0 L1.2 4 H3.5 L2.3 8" fill="none" stroke="#e8e8e8" stroke-width="0.9"/></svg>
<div class="t" style="left:741.5px;top:474.45px;font-size:7.5px;color:#eeeeee;letter-spacing:-0.02px">11:38 AM</div>
<div class="t" style="left:734.5px;top:484.45px;font-size:7.5px;color:#eeeeee;letter-spacing:0.1px">12/24/2025</div>
<svg style="left:778.5px;top:478.8px" width="8.3" height="9.7" viewBox="0 0 8.3 9.7"><path d="M1 7.5 Q2 6.5 2 4.5 Q2 1.2 4.15 1.2 Q6.3 1.2 6.3 4.5 Q6.3 6.5 7.3 7.5 Z" fill="none" stroke="#e8e8e8" stroke-width="0.95"/><path d="M3.2 8.7 H5.1" stroke="#e8e8e8" stroke-width="0.9"/></svg>
</body></html>
